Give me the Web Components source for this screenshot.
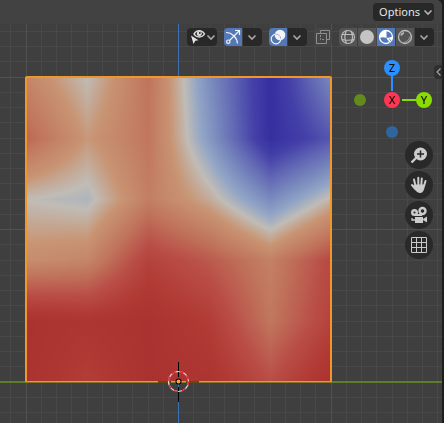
<!DOCTYPE html>
<html lang="en">
<head>
<meta charset="utf-8">
<title>3D Viewport</title>
<style>
html, body { height: 100%; margin: 0; }
body { background: #1d1d1d; font: 11px/18px "Noto Sans", "Open Sans", sans-serif; color: #e6e6e6; overflow: hidden; }
</style>
</head>
<body>
<view-port>
  <area-header slot="header">
    <menu-button slot="top">Options</menu-button>
    <icon-group><icon-button label="Object visibility" icon="eye" width="30"></icon-button></icon-group>
    <icon-group><icon-button on label="Show gizmos" icon="gizmo"></icon-button><icon-button label="Gizmo settings" icon="down" width="19"></icon-button></icon-group>
    <icon-group><icon-button on label="Show overlays" icon="overlay"></icon-button><icon-button label="Overlay settings" icon="down" width="19"></icon-button></icon-group>
    <icon-group><icon-button flat label="Toggle X-ray" icon="xray"></icon-button></icon-group>
    <icon-group><icon-button grey label="Wireframe" icon="wire"></icon-button><icon-button grey label="Solid" icon="solid"></icon-button><icon-button on label="Material preview" icon="material"></icon-button><icon-button grey label="Rendered" icon="rendered"></icon-button><icon-button label="Shading settings" icon="down" width="19"></icon-button></icon-group>
  </area-header>
  <axis-gizmo slot="side"></axis-gizmo>
  <nav-tools slot="side"></nav-tools>
</view-port>
<script>
const ICONS = {
  down: '<path d="M5.500 7.500 9 11l3.500-3.500" fill="none" stroke="#a8a8a8" stroke-width="1.600"/>',
  eye: '<path d="M7 6C9.500 1.500 15 1.500 17.500 6 15 10 9.500 10 7 6z" fill="none" stroke="#dedede" stroke-width="1.400"/><circle cx="12.300" cy="5.600" r="2.500" fill="#dedede"/><circle cx="12.800" cy="5" r="1" fill="#282828"/><path d="M4 7.500 11.500 12.300 8.300 12.800 6.500 16z" fill="#e4e4e4"/><path d="M20.500 7.500 24 11l3.500-3.500" fill="none" stroke="#a8a8a8" stroke-width="1.600"/>',
  gizmo: '<g fill="none" stroke="#f2f2f2" stroke-width="1.200"><path d="M2 4.500c6 0 11 5 11.500 11M5.500 12.500 15 3M11 2.500h4.500V7"/><circle cx="4.300" cy="13.700" r="1.700"/></g>',
  overlay: '<circle cx="11" cy="7" r="5.300" fill="#f4f4f4"/><circle cx="7" cy="11" r="4.800" fill="none" stroke="#f4f4f4" stroke-width="1.200"/><path d="M6.500 6.200a4.800 4.800 0 0 1 5.200 5.200" fill="none" stroke="#5478b5" stroke-dasharray="1 1"/>',
  xray: '<g fill="none" stroke="#8e8e8e"><path d="M6.500 5V2.500h9v9H13"/><path d="M2.500 5.500h10v10h-10z"/><path d="M6.500 7v4.500h4" stroke-dasharray="2 1"/></g>',
  wire: '<g fill="none" stroke="#bcbcbc" stroke-width="1.200"><circle cx="9" cy="9" r="6.500"/><path d="M7.500 2.500c-2 4-2 9 0 13M12 3c2 4 2 8 0 12M3 6.500h12M3 11.500c4 1 8 1 12 0"/></g>',
  solid: '<circle cx="9" cy="9" r="7" fill="#c4c4c4"/>',
  material: '<circle cx="9" cy="9" r="6.500" fill="none" stroke="#fff" stroke-width="1.300"/><path d="M9.500 2.500C5 2.500 2.500 6 2.500 10c2-1 5-.8 7 0z" fill="#fff"/><path d="M9.500 10c2-.3 4-.6 6-1.500 0 3-2 6-4.500 6.700.2-2-.3-3.700-1.500-5.200z" fill="#fff"/><path d="m10.500 12 2 2.500M12 10.500l2.500 3" stroke="#5478b5" stroke-width=".8"/>',
  rendered: '<circle cx="9" cy="9" r="6.500" fill="none" stroke="#bababa" stroke-width="1.300"/><path d="M5 7.500C5.500 6 6.500 5 8 4.800" fill="none" stroke="#bababa" stroke-width="1.800"/><path d="M6.500 14.800c4-.3 7-3.500 8.300-8M10 14.800c2.500-.8 4-2.600 5-5" fill="none" stroke="#a2a2a2"/>'
};
const svg = (body, w = 18, h = 18) => `<svg width="${w}" height="${h}" viewBox="0 0 ${w} ${h}" aria-hidden="true">${body}</svg>`;
const RESET = '*{box-sizing:border-box} button{margin:0;padding:0;border:0;font:inherit;color:inherit;cursor:pointer} svg{display:block}';

class ShadowElement extends HTMLElement {
  constructor() { super(); this.attachShadow({ mode: 'open' }); }
  connectedCallback() {
    const t = document.createElement('template');
    t.innerHTML = `<style>${RESET}${this.styles()}</style>${this.markup()}`;
    this.shadowRoot.replaceChildren(t.content.cloneNode(true));
    this.ready();
  }
  ready() {}
}

customElements.define('view-port', class extends ShadowElement {
  styles() { return `
    :host{display:block;height:100vh;padding-right:2px}
    .area{position:relative;height:100%;overflow:hidden;border-radius:0 6px 0 0;display:flex;flex-direction:column;background:#3f3f3f}
    view-scene{position:absolute;inset:0}
    .body{position:relative;display:flex;flex-direction:column;align-items:flex-end;gap:1px;padding:12px 9px 0 0}
    .tab{position:absolute;right:0;top:65px;width:8px;height:14px;background:#2f2f2f;border-radius:4px 0 0 4px}`; }
  markup() { return `<main class="area"><view-scene></view-scene><slot name="header"></slot>
    <div class="body"><slot name="side"></slot></div>
    <button class="tab" aria-label="Open sidebar">${svg('<path d="M6.500 3.500 3 7l3.500 3.500" fill="none" stroke="#a0a0a0" stroke-width="1.200"/>', 8, 14)}</button></main>`; }
});

customElements.define('area-header', class extends ShadowElement {
  styles() { return `
    :host{display:block;position:relative}
    .top{display:flex;justify-content:flex-end;height:24px;padding:3px 8px 3px 0;background:#424242}
    .tools{display:flex;justify-content:flex-end;gap:7px;height:22px;padding:4px 8px 0 0}`; }
  markup() { return '<div class="top"><slot name="top"></slot></div><div class="tools"><slot></slot></div>'; }
});

customElements.define('menu-button', class extends ShadowElement {
  styles() { return `:host{display:block} button{display:flex;align-items:center;height:18px;padding:0 0 0 6px;background:#282828;border-radius:4px}`; }
  markup() { return `<button><slot></slot>${svg('<path d="M4.500 7.500 8 11l3.500-3.500" fill="none" stroke="#b5b5b5" stroke-width="1.600"/>', 14)}</button>`; }
});

customElements.define('icon-group', class extends ShadowElement {
  styles() { return ':host{display:flex;gap:1px;height:18px;border-radius:4px;overflow:hidden}'; }
  markup() { return '<slot></slot>'; }
});

customElements.define('icon-button', class extends ShadowElement {
  styles() { return `
    :host{display:block;--face:#282828}
    :host([on]){--face:#5478b5} :host([grey]){--face:#545454} :host([flat]){--face:#464646}
    button{display:block;height:18px;background:var(--face)}`; }
  markup() { return `<button aria-label="${this.getAttribute('label')}">${svg(ICONS[this.getAttribute('icon')], Number(this.getAttribute('width')) || 18)}</button>`; }
});

customElements.define('axis-gizmo', class extends ShadowElement {
  styles() { return `
    :host{display:block;position:relative;width:82px;height:82px}
    .lines{position:absolute;inset:0}
    button{position:absolute;width:16px;height:16px;border-radius:50%;color:#111;text-align:center;line-height:16px;font-size:11px;font-weight:500}
    .z{left:33px;top:2px;background:#2b8fff} .x{left:33px;top:34px;background:#ff3653}
    .y{left:65px;top:34px;background:#8bdc00}
    .ny,.nz{width:12px;height:12px} .ny{left:3px;top:36px;background:#628a1d} .nz{left:35px;top:68px;background:#3066a0}`; }
  markup() { return `<div class="lines">${svg('<path d="M41 17v16" stroke="#2b8fff" stroke-width="2"/><path d="M51 42h16" stroke="#8bdc00" stroke-width="2"/>', 82, 82)}</div>
    <button class="z">Z</button><button class="x">X</button><button class="y">Y</button>
    <button class="ny" aria-label="Negative Y"></button><button class="nz" aria-label="Negative Z"></button>`; }
});

const NAV = {
  'Zoom': '<path d="M12 16 6.500 21.500" stroke="#ccc" stroke-width="2.400"/><circle cx="15.500" cy="13" r="6.500" fill="#ccc"/><path d="M15.500 9.500v7M12 13h7" stroke="#252525" stroke-width="1.500"/>',
  'Pan': '<g fill="none" stroke="#ccc" stroke-width="2" stroke-linecap="round"><path d="M10.500 15 9 8.500M13.300 14V6.800M16.300 14l.5-6.500M19 15l1.500-5M10 17.500 7 14"/></g><path d="M9.500 13.500h10.300c0 4-1.300 8-4.300 8.500-3 .4-5-2-8-6.500z" fill="#ccc"/>',
  'Camera view': '<g fill="none" stroke="#ccc" stroke-width="2.400"><circle cx="9.500" cy="11.500" r="2.300"/><circle cx="17.500" cy="10" r="3"/></g><path d="M10 13h7v2h-7zM10 16h8v2l4-2.500v6l-4-2.500v3h-8z" fill="#ccc"/><path d="M7 17v2h4" fill="none" stroke="#ccc" stroke-width="1.300"/>',
  'Orthographic view': '<path d="M6.500 6.500h15v15h-15zM11.500 6.500v15M16.500 6.500v15M6.500 11.500h15M6.500 16.500h15" fill="none" stroke="#c8c8c8"/>'
};
customElements.define('nav-tools', class extends ShadowElement {
  styles() { return ':host{display:flex;flex-direction:column;gap:2px} button{width:28px;height:28px;border-radius:50%;background:#292929}'; }
  markup() { return Object.entries(NAV).map(([n, i]) => `<button aria-label="${n}">${svg(i, 28, 28)}</button>`).join(''); }
});

/* Field values at the vertices of a 5 x 5 face plane, top row first. */
const FIELD = [
  [.65, .50, .72, .34, .00, .33],
  [.76, .58, .71, .38, .00, .17],
  [.50, .47, .68, .54, .33, .52],
  [.62, .65, .89, .80, .67, .86],
  [1.0, .97, 1.0, .92, .71, .89],
  [1.0, .91, 1.0, .98, .84, 1.0]
];
const RAMP = [
  [0, 53, 47, 160], [.1, 68, 64, 168], [.22, 98, 104, 180], [.34, 124, 141, 190], [.42, 146, 165, 198],
  [.5, 192, 188, 182], [.59, 200, 148, 115], [.72, 192, 116, 92], [.84, 185, 76, 70], [.93, 177, 58, 52], [1, 170, 50, 48]
];
function ramp(t) {
  let i = 1;
  while (i < RAMP.length - 1 && t > RAMP[i][0]) i++;
  const a = RAMP[i - 1], b = RAMP[i], k = Math.min(1, (t - a[0]) / (b[0] - a[0]));
  return [1, 2, 3].map(c => a[c] + (b[c] - a[c]) * k);
}
customElements.define('view-scene', class extends ShadowElement {
  styles() { return ':host{display:block} canvas{display:block;width:100%;height:100%}'; }
  markup() { return '<canvas role="img" aria-label="Plane coloured by a vertex value"></canvas>'; }
  ready() { this.draw(); addEventListener('resize', () => this.draw()); }
  draw() {
    const cv = this.shadowRoot.querySelector('canvas');
    const w = cv.width = this.clientWidth, h = cv.height = this.clientHeight;
    const g = cv.getContext('2d'), size = 305, step = size / 20;
    const ox = Math.round(w * .404) - 1, oy = h - 41;
    g.fillStyle = '#3f3f3f'; g.fillRect(0, 0, w, h);
    for (const major of [false, true]) {
      g.fillStyle = major ? '#515151' : '#484848';
      for (let i = -40; i <= 40; i++) {
        if ((i % 10 === 0) !== major) continue;
        g.fillRect(Math.round(ox + i * step), 0, 1, h);
        g.fillRect(0, Math.floor(oy + i * step), w, 1);
      }
    }
    g.fillStyle = '#3c72b4'; g.fillRect(ox, 0, 1, h);
    g.fillStyle = '#5f7b2c'; g.fillRect(0, oy - 1, w, 2);

    const x0 = ox - 152, y0 = oy - size, img = g.createImageData(size, size);
    for (let y = 0; y < size; y++) for (let x = 0; x < size; x++) {
      const u = x / 61, v = y / 61, i = Math.floor(u), j = Math.floor(v), a = u - i, b = v - j;
      const t = (FIELD[j][i] * (1 - a) + FIELD[j][i + 1] * a) * (1 - b) + (FIELD[j + 1][i] * (1 - a) + FIELD[j + 1][i + 1] * a) * b;
      img.data.set([...ramp(t), 255], (y * size + x) * 4);
    }
    g.putImageData(img, x0, y0);
    g.strokeStyle = '#f0962a'; g.lineWidth = 2;
    g.beginPath(); g.roundRect(x0, y0, size, size, 1); g.stroke();
    g.fillStyle = '#8a7422'; g.fillRect(x0, oy, size, 1);

    g.fillStyle = '#5f4a12'; g.fillRect(ox - 20, oy - 1, 13, 2); g.fillRect(ox + 8, oy - 1, 13, 2);
    g.fillStyle = '#000'; g.fillRect(ox, oy - 20, 1, 15); g.fillRect(ox, oy + 5, 1, 15);
    g.lineWidth = 1.2;
    g.strokeStyle = '#ddd'; g.beginPath(); g.arc(ox + .5, oy - .5, 10, 0, 7); g.stroke();
    g.strokeStyle = '#f01818'; g.setLineDash([4, 4]); g.beginPath(); g.arc(ox + .5, oy - .5, 10, 0, Math.PI * 2); g.stroke(); g.setLineDash([]);
    g.fillStyle = '#000'; g.beginPath(); g.arc(ox + .5, oy - .5, 3, 0, 7); g.fill();
    g.fillStyle = '#ff9d2e'; g.beginPath(); g.arc(ox + .5, oy - .5, 2, 0, 7); g.fill();
  }
});
</script>
</body>
</html>
